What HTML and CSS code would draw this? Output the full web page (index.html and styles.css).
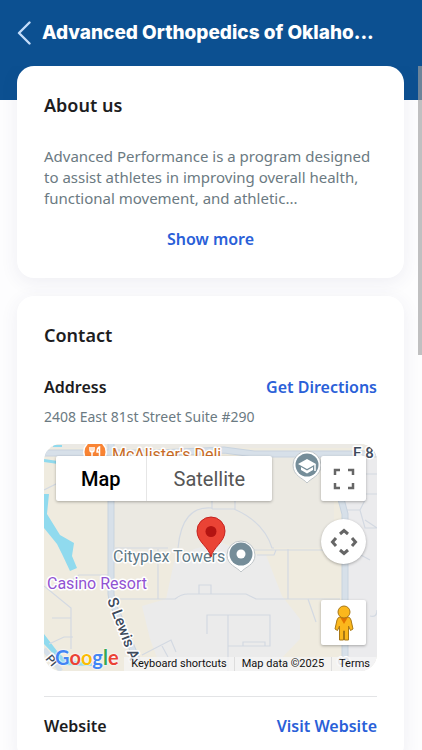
FILE: index.html
```html
<!doctype html>
<html lang="en">
<head>
<meta charset="utf-8">
<meta name="viewport" content="width=device-width,initial-scale=1">
<title>Advanced Orthopedics of Oklahoma</title>
<link rel="stylesheet" href="styles.css">
</head>
<body>
<div class="app">
	<header class="topbar">
		<button class="back" type="button" aria-label="Back">
			<svg width="14" height="24" viewBox="0 0 14 24"><path d="M12.500 1.500 2 12 12.500 22.500" fill="none" stroke="#c3dcfa" stroke-width="2.400" stroke-linecap="round" stroke-linejoin="round"/></svg>
		</button>
		<h1>Advanced Orthopedics of Oklaho...</h1>
	</header>
	<main class="content">
		<section class="card about">
			<h2>About us</h2>
			<p>Advanced Performance is a program designed to assist athletes in improving overall health, functional movement, and athletic...</p>
			<button class="more" type="button">Show more</button>
		</section>
		<section class="card">
			<h2>Contact</h2>
			<div class="row">
				<h3>Address</h3>
				<a href="#directions">Get Directions</a>
			</div>
			<p class="street">2408 East 81st Street Suite #290</p>
			<div class="map">
				<svg class="tiles" viewBox="0 0 333 227" preserveAspectRatio="xMidYMid slice">
					<rect width="333" height="227" fill="#efebdf"/>
					<!-- blocks -->
					<path d="M70 12H290V104H228L205 106 178 98 150 107H71Z" fill="#ebe9e2"/>
					<path d="M98 162 122 155 130 118 150 105 176 98 205 110 222 111 238 152 256 175 256 195 225 227H118L106 195Z" fill="#ebebeb"/>
					<path d="M297 14H333V227H301V150Z" fill="#ebebed"/>
					<path d="M0 0H333V4H0Z" fill="#ebe9e4"/>
					<!-- water -->
					<path d="M0 50 5 50 3 70 16 91 30 99 28 112 33 124 26 127 18 110 13 100 0 84Z" fill="#90daee"/>
					<path d="M0 15 14 17V20L0 18ZM9 1H18V3H9ZM0 190 13 207 22 216 48 219V222L20 221 0 200Z" fill="#90daee"/>
					<!-- thin streets -->
					<g fill="none" stroke="#d3d9e2" stroke-width="1.200">
						<path d="M0 46 18 37M71 104H124M114 105V155M134 104Q138 61 168 64M168 55V65M191 55V65M168 65H190Q220 78 228 104H230M204 106H294M232 106L230 111H213M244 105V155M70 155H131Q137 150 144 150H202L212 155H296M155 150V141H167V150"/>
						<path d="M163 190V171H226V202H184M184 171V227M199 202V198H221V202M264 155 272 178M67 131H35L20 142M0 142 27 164V205M8 174H27M5 200 20 193H29M98 211 127 196 132 208M118 202 124 213"/>
						<path d="M297 30H333M297 50H333M297 66H316L321 84H333M321 76 333 84M316 66 322 54M301 119 315 110 326 116M326 172Q333 174 333 166"/>
					</g>
					<!-- main roads -->
					<g fill="none" stroke="#c8d3df" stroke-width="7">
						<path d="M0 9H112L180 6 210 10H333M67 0V150Q68 160 74 171L94 218M297 10V55L301 70V227"/>
					</g>
					<g fill="none" stroke="#d7e0e9" stroke-width="5">
						<path d="M0 9H112L180 6 210 10H333M67 0V150Q68 160 74 171L94 218M297 10V55L301 70V227"/>
						<path d="M0 205 17 227"/>
					</g>
					<!-- places -->
					<g class="place">
						<text x="68" y="16" fill="#c96c26">McAlister's Deli</text>
						<text x="69" y="118" fill="#607985">Cityplex Towers</text>
						<text x="3" y="145" fill="#9152d2">Casino Resort</text>
					</g>
					<g class="road">
						<text x="309" y="14">E 8</text>
						<text transform="translate(63 156) rotate(69)">S Lewis A</text>
						<text class="small" transform="translate(1 215) rotate(50)">Pl</text>
						<text class="faint" transform="translate(305 222) rotate(-90)">S</text>
					</g>
					<circle cx="51" cy="8" r="12" fill="#fff"/>
					<circle cx="51" cy="8" r="10.500" fill="#f98434"/>
					<path d="M46 3V6Q46 8 48 8V13M48 3V8M50 3V6Q50 8 48 8M55.500 13V3Q53 4 53 8H55" fill="none" stroke="#fff" stroke-width="1.500"/>
					<!-- school pin -->
					<path d="M263 39C259 34 249 32 249 21A14 14 0 0 1 277 21C277 32 267 34 263 39Z" fill="#fff" stroke="#bfc5c8"/>
					<circle cx="263" cy="21" r="11.500" fill="#758d99"/>
					<path d="M254 20 263 15 272 20 263 25ZM257 23 263 26.500 269 23V26L263 29.500 257 26Z" fill="#fff"/>
					<path d="M271 20V27" stroke="#fff" stroke-width="1.500"/>
					<!-- tower pin -->
					<path d="M197 128C193 123 183 121 183 111A14 14 0 0 1 211 111C211 121 201 123 197 128Z" fill="#fff" stroke="#bfc5c8"/>
					<circle cx="197" cy="110" r="11.500" fill="#758d99"/>
					<circle cx="197" cy="110" r="4.500" fill="#fff"/>
					<!-- selected address -->
					<path d="M167 113C165 103 153 98 153 87A14 14 0 0 1 181 87C181 98 169 103 167 113Z" fill="#ea4335" stroke="#c5221f"/>
					<circle cx="167" cy="87.500" r="5.500" fill="#b31412"/>
				</svg>
				<div class="types">
					<button class="on" type="button">Map</button>
					<button type="button">Satellite</button>
				</div>
				<div class="controls">
					<button type="button" aria-label="Full screen">
						<svg width="22" height="22" viewBox="0 0 22 22"><path d="M2 7V2H7M15 2H20V7M20 15V20H15M7 20H2V15" fill="none" stroke="#666" stroke-width="2.500"/></svg>
					</button>
					<button class="round" type="button" aria-label="Move map">
						<svg width="28" height="28" viewBox="0 0 28 28"><path d="M10 6 14 2.500 18 6M10 22 14 25.500 18 22M6 10 2.500 14 6 18M22 10 25.500 14 22 18" fill="none" stroke="#666" stroke-width="3"/></svg>
					</button>
					<button class="pegman" type="button" aria-label="Street View">
						<svg width="20" height="36" viewBox="0 0 20 36">
							<path d="M6 12H14Q16 12 17 15L19 24 16.500 25.500 14.500 21V35H10.500V26H9.500V35H5.500V21L3.500 25.500 1 24 3 15Q4 12 6 12Z" fill="#fbb71c" stroke="#a87816"/>
							<path d="M6 12H14L10 19Z" fill="#e37400"/>
							<circle cx="10" cy="7" r="6" fill="#fbb71c" stroke="#a87816"/>
						</svg>
					</button>
				</div>
				<a class="google" href="#google" aria-label="Google"><span class="b">G</span><span class="r">o</span><span class="y">o</span><span class="b">g</span><span class="g">l</span><span class="r">e</span></a>
				<div class="legal">
					<button type="button">Keyboard shortcuts</button>
					<span>Map data ©2025</span>
					<a href="#terms">Terms</a>
				</div>
			</div>
			<div class="row website">
				<h3>Website</h3>
				<a href="#website">Visit Website</a>
			</div>
		</section>
	</main>
	<div class="thumb"></div>
</div>
</body>
</html>
```
FILE: styles.css
```css
*{box-sizing:border-box;}
body{margin:0;background:#fdfdfe;font-family:"Noto Sans",sans-serif;color:#1d1d1f;}
h1,h2,h3,p{margin:0;}
button{margin:0;padding:0;border:0;background:none;font:inherit;color:inherit;cursor:pointer;}
a{text-decoration:none;}
svg{display:block;}

.app{height:100vh;display:flex;flex-direction:column;position:relative;background:linear-gradient(#0c5091 100px,#fdfdfe 100px);}
.topbar{flex:none;height:66px;padding:0 17px;display:flex;align-items:center;gap:11px;color:#fff;}
.topbar h1{min-width:0;font:800 19px/28px "Inter",sans-serif;white-space:nowrap;overflow:hidden;}
.content{flex:1;min-height:0;padding:0 18px 18px 17px;overflow-y:auto;scrollbar-width:none;}
.thumb{width:4px;height:289px;position:absolute;top:66px;right:0;background:rgba(160,160,160,.65);}

.card{padding:24px 27px;border-radius:17px;background:#fff;box-shadow:0 4px 18px rgba(60,60,110,.08);}
.card + .card{margin-top:18px;}
.card h2{font-size:18px;line-height:30px;font-weight:600;}
.card h3{font-size:16px;line-height:24px;font-weight:600;}
.about p{margin-top:26px;font-size:15px;line-height:21px;color:#6b7a82;}
.more{display:block;margin:18px auto 0;font-size:16px;line-height:24px;font-weight:600;color:#2a60d8;}
.about{padding-bottom:27px;}

.row{margin-top:25px;display:flex;justify-content:space-between;}
.row a{font-size:16px;line-height:24px;font-weight:600;color:#2a60d8;}
.street{margin-top:8px;font-size:14px;line-height:20px;color:#6b7a82;}
.website{padding-top:17px;border-top:1px solid #e3e4e6;}

.map{height:227px;margin-top:17px;position:relative;overflow:hidden;border-radius:17px;font-family:Roboto,sans-serif;}
.tiles{width:100%;height:100%;}
.place text,.road text{stroke:#fff;stroke-width:3px;stroke-linejoin:round;paint-order:stroke;font-family:Roboto,sans-serif;}
.place text{font-size:16px;}
.road text{font-size:15px;font-weight:500;fill:#3d4a5c;}
.road .small{font-size:12px;}
.road .faint{fill:#a9b1bb;}

.types{position:absolute;top:12px;left:12px;display:flex;background:#fff;border-radius:2px;box-shadow:0 1px 3px rgba(0,0,0,.3);}
.types button{height:45px;padding:0 27px;font-size:20px;line-height:24px;color:#565656;}
.types .on{padding:0 25px;font-weight:500;color:#000;border-right:1px solid #e6e6e6;}
.controls{position:absolute;top:12px;right:11px;display:grid;gap:18px;}
.controls button{width:45px;height:45px;display:grid;place-items:center;background:#fff;border-radius:2px;box-shadow:0 1px 3px rgba(0,0,0,.3);}
.controls .round{border-radius:50%;}
.controls .pegman{margin-top:18px;}

.google{position:absolute;left:11px;bottom:0;font:700 20px/28px "Lato",sans-serif;text-shadow:0 0 2px #fff,0 0 2px #fff;}
.google .b{color:#4285f4;}
.google .r{color:#ea4335;}
.google .y{color:#fbbc04;}
.google .g{color:#34a853;}
.legal{position:absolute;right:0;bottom:0;display:flex;font-size:11px;line-height:14px;color:#111;background:rgba(245,245,245,.75);}
.legal > *{padding:0 7px;color:inherit;}
.legal > * + *{border-left:1px solid #ddd;}
```
